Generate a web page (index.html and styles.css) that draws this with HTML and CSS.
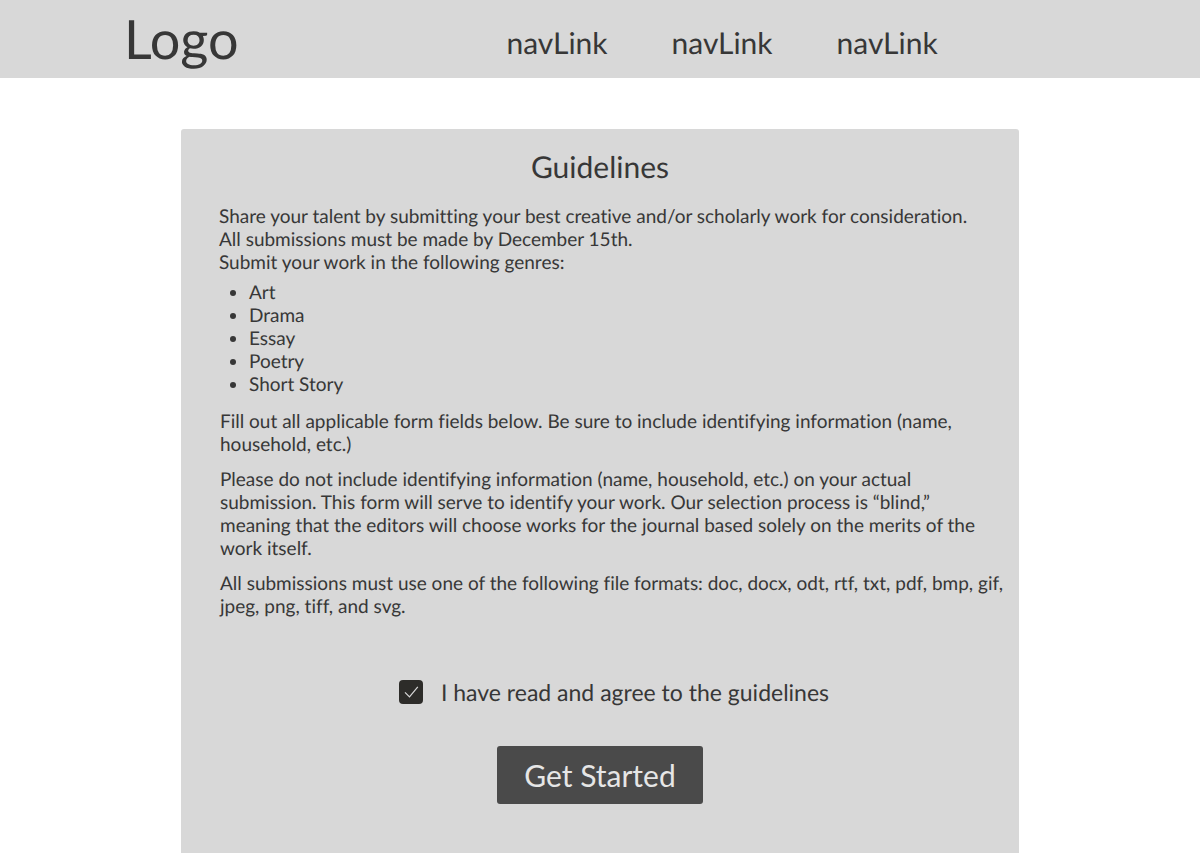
FILE: index.html
```html
<!DOCTYPE html>
<html lang="en">
<head>
<meta charset="utf-8">
<meta name="viewport" content="width=device-width, initial-scale=1">
<title>Guidelines</title>
<link rel="stylesheet" href="styles.css">
</head>
<body>
<header class="site-header">
  <a class="logo" href="#">Logo</a>
  <nav class="nav">
    <a class="nav-link" href="#">navLink</a>
    <a class="nav-link" href="#">navLink</a>
    <a class="nav-link" href="#">navLink</a>
  </nav>
</header>
<main class="card">
  <h1 class="title">Guidelines</h1>
  <section class="intro">
    <p>Share your talent by submitting your best creative and/or scholarly work for consideration.<br>All submissions must be made by December 15th.<br>Submit your work in the following genres:</p>
    <ul class="genres">
      <li>Art</li>
      <li>Drama</li>
      <li>Essay</li>
      <li>Poetry</li>
      <li>Short Story</li>
    </ul>
  </section>
  <section class="rules">
    <p>Fill out all applicable form fields below. Be sure to include identifying information (name, household, etc.)</p>
    <p>Please do not include identifying information (name, household, etc.) on your actual<br>submission. This form will serve to identify your work. Our selection process is “blind,”<br>meaning that the editors will choose works for the journal based solely on the merits of the work itself.</p>
    <p>All submissions must use one of the following file formats: doc, docx, odt, rtf, txt, pdf, bmp, gif, jpeg, png, tiff, and svg.</p>
  </section>
  <form class="agreement">
    <div class="agree">
      <span class="tick">
        <input class="tick-input" type="checkbox" id="agree" checked>
        <svg class="tick-mark" viewBox="0 0 24 24" aria-hidden="true"><path d="M6 12.300l4.500 4.500L18.800 6.800"/></svg>
      </span>
      <label for="agree">I have read and agree to the guidelines</label>
    </div>
    <button class="start" type="button">Get Started</button>
  </form>
</main>
</body>
</html>
```

FILE: styles.css
```css
* {
  box-sizing: border-box;
}

body {
  margin: 0;
  background: #fff;
  color: #373737;
  font-family: Lato, "Open Sans", sans-serif;
  font-size: 19px;
  font-variant-ligatures: no-common-ligatures;
  line-height: 23px;
  text-rendering: geometricPrecision;
}

a {
  color: inherit;
  text-decoration: none;
}

p {
  margin: 0;
}

.site-header {
  display: flex;
  align-items: center;
  min-height: 78px;
  padding: 0 124px;
  background: #d8d8d8;
}

.logo {
  font-size: 54px;
  line-height: 78px;
}

.nav {
  display: flex;
  gap: 64px;
  margin-left: 268px;
  padding-top: 8px;
  font-size: 30px;
  line-height: 36px;
}

.card {
  width: 70%;
  max-width: 838px;
  min-height: calc(100vh - 129px);
  margin: 51px auto 0;
  padding: 20px 12px 48px;
  border-radius: 3px 3px 0 0;
  background: #d8d8d8;
}

.title {
  margin: 0;
  font-size: 30px;
  font-weight: 400;
  line-height: 36px;
  text-align: center;
}

.intro {
  margin-top: 20px;
  padding-left: 26px;
}

.genres {
  margin: 7px 0 0;
  padding-left: 30px;
}

.rules {
  display: grid;
  gap: 12px;
  margin-top: 14px;
  padding-left: 27px;
}

.agreement {
  display: flex;
  flex-direction: column;
  align-items: center;
  margin-top: 60px;
}

.agree {
  display: flex;
  align-items: center;
  gap: 18px;
  padding-left: 28px;
  font-size: 23px;
  line-height: 28px;
}

.tick {
  display: grid;
  width: 24px;
  height: 24px;
}

.tick-input,
.tick-mark {
  grid-area: 1 / 1;
  width: 24px;
  height: 24px;
  margin: 0;
}

.tick-input {
  appearance: none;
  border-radius: 4px;
  background: #2d2c29;
}

.tick-mark {
  visibility: hidden;
  fill: none;
  stroke: #d8d8d8;
  stroke-width: 1.2;
  pointer-events: none;
}

.tick-input:checked + .tick-mark {
  visibility: visible;
}

.start {
  margin-top: 40px;
  padding: 11px 27px;
  border: 0;
  border-radius: 3px;
  background: #4a4a4a;
  color: #e6e6e6;
  font: inherit;
  font-size: 30px;
  line-height: 36px;
}
```
